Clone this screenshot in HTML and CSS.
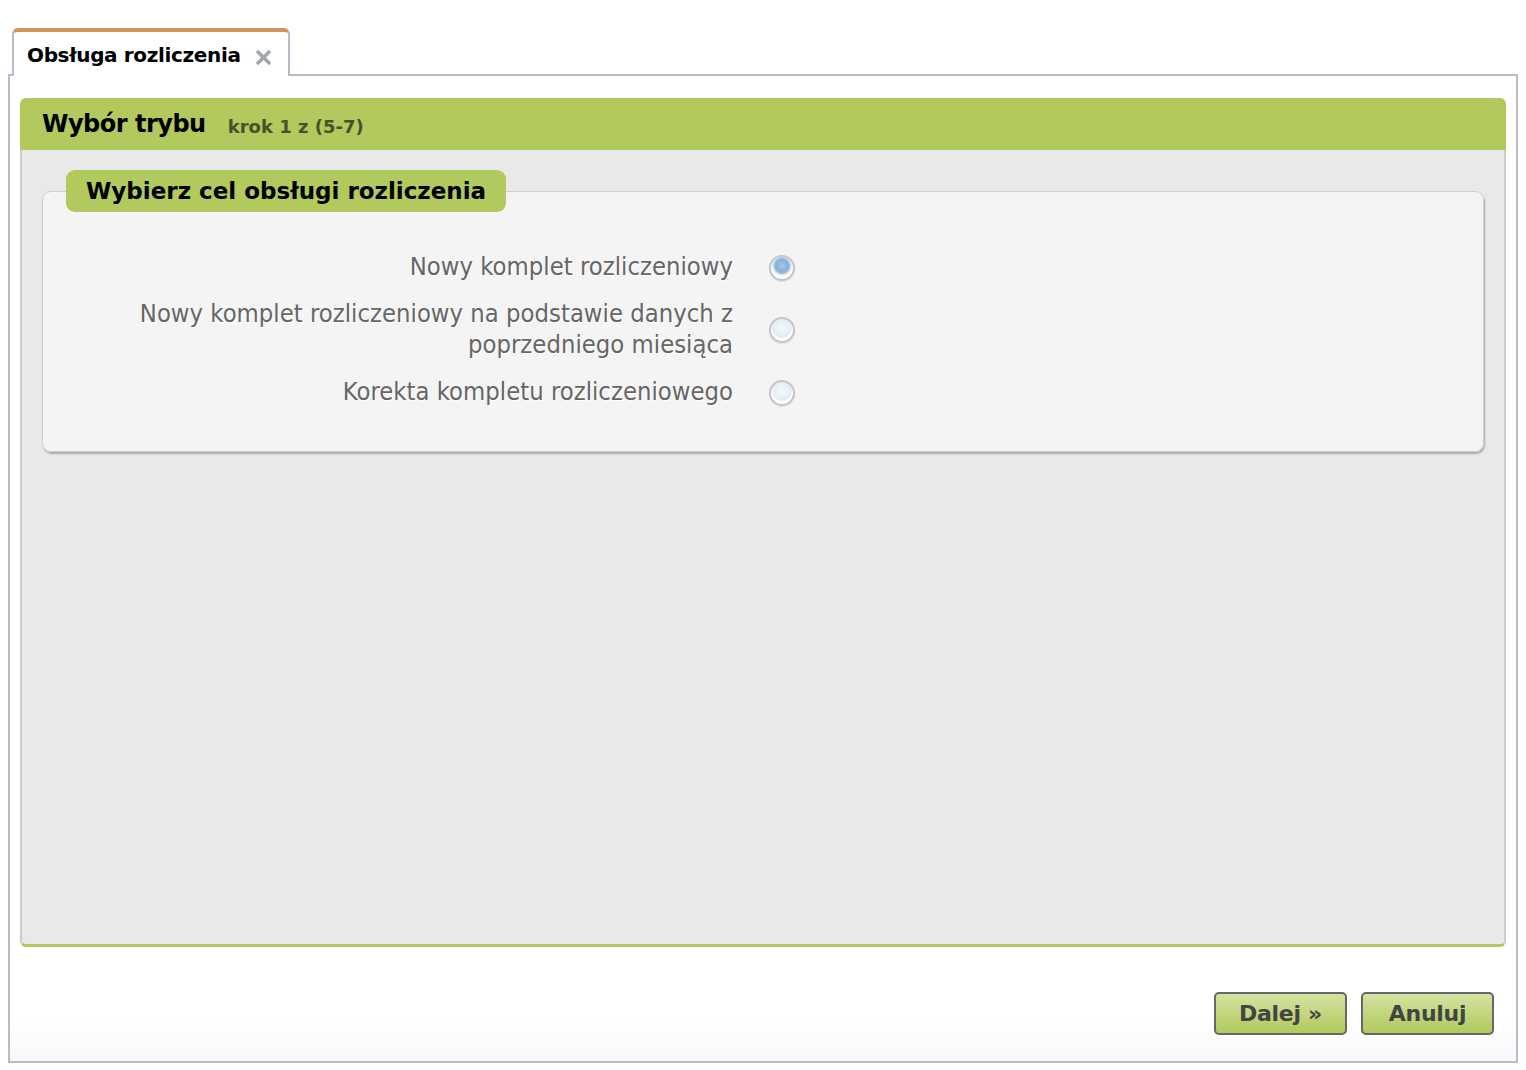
FILE: index.html
```html
<!DOCTYPE html>
<html lang="pl">
<head>
<meta charset="utf-8">
<title>Obsługa rozliczenia</title>
<link rel="stylesheet" href="styles.css">
</head>
<body>
<div class="page">
  <div class="tabs">
    <div class="tab">
      <span class="tab-title">Obsługa rozliczenia</span>
      <svg class="tab-close" width="19" height="17" viewBox="0 0 19 17" aria-hidden="true">
        <path d="M3 2 L16 15 M16 2 L3 15" stroke="#a2a7af" stroke-width="3.6" stroke-linecap="butt" fill="none"/>
      </svg>
    </div>
  </div>
  <div class="frame">
    <div class="wizard">
      <div class="wiz-head">
        <span class="wiz-title">Wybór trybu</span>
        <span class="wiz-step">krok 1 z (5-7)</span>
      </div>
      <div class="wiz-body">
        <fieldset class="group">
          <legend class="group-title">Wybierz cel obsługi rozliczenia</legend>
          <div class="options">
            <label class="opt-label" for="o1">Nowy komplet rozliczeniowy</label>
            <input class="radio" type="radio" name="cel" id="o1" checked>
            <label class="opt-label" for="o2">Nowy komplet rozliczeniowy na podstawie danych z poprzedniego miesiąca</label>
            <input class="radio" type="radio" name="cel" id="o2">
            <label class="opt-label" for="o3">Korekta kompletu rozliczeniowego</label>
            <input class="radio" type="radio" name="cel" id="o3">
          </div>
        </fieldset>
      </div>
    </div>
    <div class="actions">
      <button class="btn" type="button">Dalej »</button>
      <button class="btn" type="button">Anuluj</button>
    </div>
  </div>
</div>
</body>
</html>
```

FILE: styles.css
```css
html, body {
  margin: 0;
  padding: 0;
  background: #ffffff;
}

.page {
  padding: 28px 8px 0 8px;
  width: 1510px;
  font-family: "DejaVu Sans", Verdana, sans-serif;
}

.tabs {
  display: flex;
  padding-left: 4px;
  margin-bottom: -2px;
}

.tab {
  position: relative;
  z-index: 1;
  box-sizing: border-box;
  width: 278px;
  height: 48px;
  background: #ffffff;
  border-top: 4px solid #d4925a;
  border-left: 2px solid #b9bbc9;
  border-right: 2px solid #b9bbc9;
  border-radius: 6px 6px 0 0;
  display: flex;
  align-items: center;
  padding: 2px 0 0 13px;
  gap: 13px;
}

.tab-title {
  font-weight: bold;
  font-size: 20px;
  color: #000;
  letter-spacing: -0.35px;
}

.tab-close {
  margin-top: 4px;
}

.frame {
  box-sizing: border-box;
  border: 2px solid #b9bbc9;
  height: 989px;
  padding: 22px 10px 0 10px;
  background: linear-gradient(to bottom, #ffffff 96%, #f8f8fa 100%);
}

.wizard {
  display: flex;
  flex-direction: column;
}

.wiz-head {
  height: 52px;
  background: #b1c95d;
  border-radius: 6px 6px 0 0;
  display: flex;
  align-items: center;
  padding-left: 22px;
  gap: 22px;
}

.wiz-title {
  font-weight: bold;
  font-size: 24px;
  color: #000;
  letter-spacing: -0.5px;
}

.wiz-step {
  font-weight: bold;
  font-size: 18px;
  color: #4a502a;
  margin-top: 4px;
}

.wiz-body {
  box-sizing: border-box;
  height: 797px;
  background: #e9e9e9;
  border-left: 2px solid #cdcdcd;
  border-right: 2px solid #cdcdcd;
  border-bottom: 3px solid #b1c95d;
  border-radius: 0 0 6px 6px;
  padding: 20px 20px 0 20px;
}

.group {
  margin: 0;
  padding: 0 0 44px 0;
  background: #f4f4f4;
  border: 1px solid #cfcfcf;
  border-radius: 9px;
  box-shadow: 1px 2px 2px rgba(0, 0, 0, 0.28);
}

.group-title {
  margin-left: 23px;
  padding: 0 20px;
  height: 42px;
  line-height: 42px;
  background: #b1c95d;
  border-radius: 9px;
  font-weight: bold;
  font-size: 23px;
  color: #000;
  letter-spacing: 0;
}

.options {
  display: grid;
  grid-template-columns: 690px 26px;
  column-gap: 36px;
  row-gap: 16px;
  align-items: center;
  padding-top: 39px;
}

.opt-label {
  justify-self: end;
  text-align: right;
  max-width: 640px;
  font-family: "DejaVu Sans Condensed", "DejaVu Sans", sans-serif;
  font-size: 25.4px;
  line-height: 31px;
  color: #666666;
  text-shadow: 1px 1px 0 #ffffff;
}

.radio {
  appearance: none;
  -webkit-appearance: none;
  margin: 2px 0 0 0;
  box-sizing: border-box;
  width: 26px;
  height: 26px;
  border-radius: 50%;
  border: 2px solid #c3c4cc;
  background: radial-gradient(circle at 50% 40%, #f4f8fc 0, #e2ecf6 55%, #ffffff 62%, #ffffff 100%);
  box-shadow: 0 1px 1px rgba(0, 0, 0, 0.08);
}

.radio:checked {
  background: radial-gradient(circle at 50% 40%, #a9c8e4 0, #86b0d8 34%, #9dbfe0 44%, #e8eff6 54%, #ffffff 64%, #ffffff 100%);
}

.actions {
  display: flex;
  justify-content: flex-end;
  gap: 14px;
  margin-top: 45px;
  padding-right: 12px;
}

.btn {
  box-sizing: border-box;
  width: 133px;
  height: 43px;
  border: 2px solid #676767;
  border-radius: 5px;
  background: linear-gradient(to bottom, #d4e3a2 0%, #c2d67f 50%, #b1c95d 100%);
  font-family: "DejaVu Sans", Verdana, sans-serif;
  font-weight: bold;
  font-size: 22px;
  color: #444444;
  letter-spacing: -0.3px;
  padding: 0;
  cursor: pointer;
}
```
